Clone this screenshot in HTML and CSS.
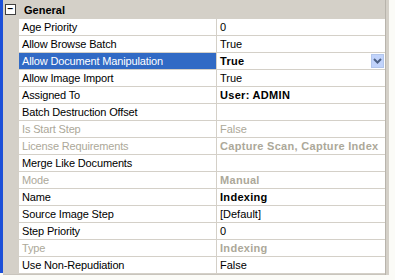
FILE: index.html
```html
<!DOCTYPE html>
<html lang="en">

<head>
  <meta charset="UTF-8">
  <title>Properties</title>
  <link rel="stylesheet" href="styles.css">
</head>

<body>
  <div class="frame">
    <div class="edge"></div>
    <div class="grid">
      <div class="category">
        <span class="toggle">−</span>
        <span class="cat-name">General</span>
      </div>
      <div class="row"><div class="gutter"></div><div class="name">Age Priority</div><div class="value">0</div></div>
      <div class="row"><div class="gutter"></div><div class="name">Allow Browse Batch</div><div class="value">True</div></div>
      <div class="row selected"><div class="gutter"></div><div class="name">Allow Document Manipulation</div><div class="value bold">True<span class="drop"><svg width="9" height="6" viewBox="0 0 9 6"><path d="M1 1 L4.5 4.5 L8 1" fill="none" stroke="#4d6185" stroke-width="2"/></svg></span></div></div>
      <div class="row"><div class="gutter"></div><div class="name">Allow Image Import</div><div class="value">True</div></div>
      <div class="row"><div class="gutter"></div><div class="name">Assigned To</div><div class="value bold">User: ADMIN</div></div>
      <div class="row"><div class="gutter"></div><div class="name">Batch Destruction Offset</div><div class="value"></div></div>
      <div class="row off"><div class="gutter"></div><div class="name">Is Start Step</div><div class="value">False</div></div>
      <div class="row off"><div class="gutter"></div><div class="name">License Requirements</div><div class="value bold">Capture Scan, Capture Index</div></div>
      <div class="row"><div class="gutter"></div><div class="name">Merge Like Documents</div><div class="value"></div></div>
      <div class="row off"><div class="gutter"></div><div class="name">Mode</div><div class="value bold">Manual</div></div>
      <div class="row"><div class="gutter"></div><div class="name">Name</div><div class="value bold">Indexing</div></div>
      <div class="row"><div class="gutter"></div><div class="name">Source Image Step</div><div class="value">[Default]</div></div>
      <div class="row"><div class="gutter"></div><div class="name">Step Priority</div><div class="value">0</div></div>
      <div class="row off"><div class="gutter"></div><div class="name">Type</div><div class="value bold">Indexing</div></div>
      <div class="row"><div class="gutter"></div><div class="name">Use Non-Repudiation</div><div class="value">False</div></div>
    </div>
    <div class="side"></div>
  </div>
  <div class="foot"></div>
</body>

</html>
```

FILE: styles.css
```css
body {
  margin: 0;
  background-color: #fbfbf7;
  font-family: "Liberation Sans", Arial, sans-serif;
  font-size: 11px;
  color: #000;
}

.frame {
  display: flex;
  height: 275px;
}

.edge {
  width: 3px;
  height: 273px;
  background-color: #1d50d8;
}

.grid {
  width: 382px;
  background-color: #fff;
  border-bottom: 1px solid #c8c4bc;
}

.side {
  width: 3px;
  background-color: #d4d0c8;
  border-left: 1px solid #b8b4ac;
}

.foot {
  height: 5px;
  background-color: #fbfbf7;
}

.category {
  display: flex;
  align-items: center;
  height: 19px;
  background-color: #d4d0c8;
}

.toggle {
  width: 9px;
  height: 9px;
  margin-left: 2px;
  border: 1px solid #404040;
  background-color: #fff;
  font-size: 10px;
  line-height: 8px;
  text-align: center;
  font-weight: bold;
}

.cat-name {
  margin-left: 8px;
  font-weight: bold;
}

.row {
  display: flex;
  height: 16px;
  border-bottom: 1px solid #d4d0c8;
}

.gutter {
  width: 16px;
  background-color: #d4d0c8;
}

.name {
  width: 194px;
  padding-left: 3px;
  line-height: 17px;
  border-right: 1px solid #d4d0c8;
  white-space: nowrap;
  letter-spacing: -0.15px;
}

.value {
  flex: 1;
  position: relative;
  padding-left: 3px;
  line-height: 17px;
  white-space: nowrap;
}

.bold {
  font-weight: bold;
  letter-spacing: 0.3px;
}

.off .name,
.off .value {
  color: #aca899;
}

.selected .name {
  background-color: #316ac5;
  color: #fff;
}

.drop {
  position: absolute;
  right: 1px;
  top: 1px;
  width: 13px;
  height: 14px;
  background-color: #c1d3fb;
  border: 1px solid #b2c6ec;
  box-sizing: border-box;
  display: flex;
  align-items: center;
  justify-content: center;
}
```
